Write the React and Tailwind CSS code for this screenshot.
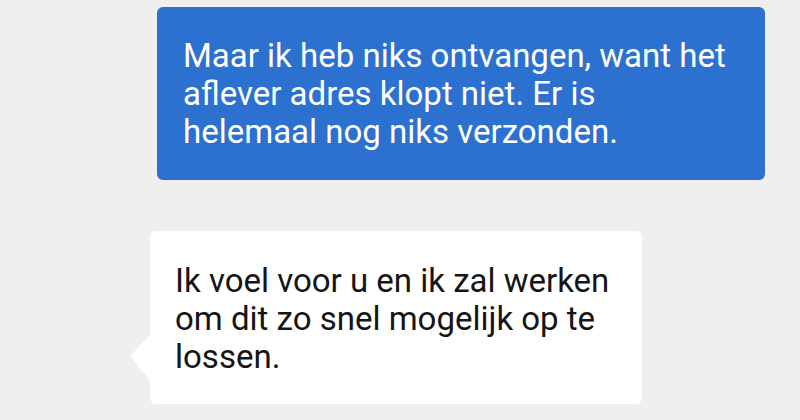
import React from "react";

const Chat = () => {
  return (
    <div className="w-[800px] h-[420px] bg-[#efefef] overflow-hidden" style={{ fontFamily: "Roboto, 'Noto Sans', sans-serif" }}>
      <div className="flex flex-col pt-[7px]">
        {/* Outgoing message */}
        <div className="ml-[157px] w-[608px] h-[173px] bg-[#2c71d0] rounded-md pl-[26px] pt-[30px] text-white text-[33px] leading-[38px]">
          Maar ik heb niks ontvangen, want het<br />
          aflever adres klopt niet. Er is<br />
          helemaal nog niks verzonden.
        </div>

        {/* Incoming message */}
        <div className="relative ml-[150px] mt-[51px] w-[492px] h-[173px] bg-white rounded-md pl-[25px] pt-[31px] text-[#151515] text-[33px] leading-[38px]">
          <svg className="absolute -left-[20px] top-[103px]" width="21" height="48" viewBox="0 0 21 48">
            <path d="M21 0 L0 22 L21 48 Z" fill="#ffffff" />
          </svg>
          Ik voel voor u en ik zal werken<br />
          om dit zo snel mogelijk op te<br />
          lossen.
        </div>
      </div>
    </div>
  );
};

export default function App() {
  return <Chat />;
}
